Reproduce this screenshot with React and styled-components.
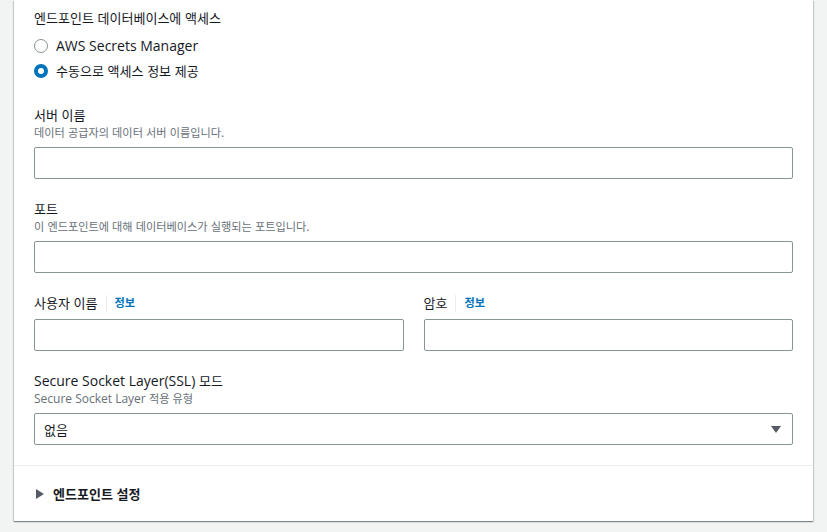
import React from 'react';
import styled, { createGlobalStyle } from 'styled-components';

const GlobalStyle = createGlobalStyle`
  body {
    margin: 0;
    background: #f2f3f3;
    font-family: "Open Sans", "Noto Sans CJK KR", sans-serif;
    color: #16191f;
    font-size: 14px;
  }
`;

const Page = styled.div`
  padding: 0 14px 10px 14px;
`;

const Card = styled.div`
  background: #fff;
  box-shadow: 0 1px 1px 0 rgba(0, 28, 36, 0.3), 1px 1px 1px 0 rgba(0, 28, 36, 0.15),
    -1px 1px 1px 0 rgba(0, 28, 36, 0.15);
`;

const Body = styled.div`
  padding: 8px 20px 20px;
  display: flex;
  flex-direction: column;
  gap: 20px;
`;

// Korean glyphs in the reference font are narrower than Noto CJK
const Hangul = styled.span`
  font-family: "Noto Sans CJK KR", sans-serif;
  font-size: 0.93em;
  line-height: 1;
`;

const T = ({ children }) => (
  <span>
    {String(children)
      .split(/([가-힣]+)/)
      .map((part, i) => (i % 2 ? <Hangul key={i}>{part}</Hangul> : part))}
  </span>
);

const Field = styled.div`
  display: flex;
  flex-direction: column;
`;

const Label = styled.div`
  display: flex;
  align-items: center;
  font-size: 14px;
  line-height: 20px;
  height: 20px;
  color: #16191f;
`;

const Info = styled.span`
  display: inline-flex;
  align-items: center;
  font-size: 12px;
  font-weight: 700;
  color: #0073bb;
  &::before {
    content: '';
    width: 1px;
    height: 17px;
    background: #eaeded;
    margin: 0 8px 0 8px;
  }
`;

const Description = styled.div`
  font-size: 12px;
  line-height: 16px;
  height: 16px;
  color: #687078;
`;

const Control = styled.div`
  margin-top: 6px;
`;

const Input = styled.input`
  display: block;
  box-sizing: border-box;
  width: 100%;
  height: 32px;
  border: 1px solid #879596;
  border-radius: 2px;
  padding: 0 9px;
  font: inherit;
  outline: none;
`;

const Select = styled.div`
  box-sizing: border-box;
  height: 32px;
  border: 1px solid #879596;
  border-radius: 2px;
  padding: 0 11px 0 9px;
  display: flex;
  align-items: center;
  justify-content: space-between;
  font-size: 14px;
`;

const RadioGroup = styled.div`
  display: flex;
  flex-direction: column;
  margin: 5px 0 2px;
`;

const RadioRow = styled.label`
  display: flex;
  align-items: center;
  height: 25px;
  gap: 8px;
  font-size: 14px;
`;

const RadioDot = styled.span`
  box-sizing: border-box;
  width: 14px;
  height: 14px;
  border-radius: 50%;
  border: ${p => (p.checked ? '4px solid #0073bb' : '1.5px solid #879596')};
  background: #fff;
`;

const Row = styled.div`
  display: grid;
  grid-template-columns: 1fr 1fr;
  gap: 20px;
`;

const Footer = styled.div`
  border-top: 1px solid #eaeded;
  height: 56px;
  box-sizing: border-box;
  padding: 0 20px 0 22px;
  display: flex;
  align-items: center;
  gap: 9px;
  font-weight: 700;
  font-size: 14px;
  line-height: 20px;
  color: #16191f;
`;

function Radio({ checked, children }) {
  return (
    <RadioRow>
      <RadioDot checked={checked} />
      <T>{children}</T>
    </RadioRow>
  );
}

export default function App() {
  return (
    <Page>
      <GlobalStyle />
      <Card>
        <Body>
          <Field>
            <Label><T>엔드포인트 데이터베이스에 액세스</T></Label>
            <RadioGroup>
              <Radio>AWS Secrets Manager</Radio>
              <Radio checked>수동으로 액세스 정보 제공</Radio>
            </RadioGroup>
          </Field>
          <Field>
            <Label><T>서버 이름</T></Label>
            <Description><T>데이터 공급자의 데이터 서버 이름입니다.</T></Description>
            <Control><Input /></Control>
          </Field>
          <Field>
            <Label><T>포트</T></Label>
            <Description><T>이 엔드포인트에 대해 데이터베이스가 실행되는 포트입니다.</T></Description>
            <Control><Input /></Control>
          </Field>
          <Row>
            <Field>
              <Label><T>사용자 이름</T><Info><T>정보</T></Info></Label>
              <Control><Input /></Control>
            </Field>
            <Field>
              <Label><T>암호</T><Info><T>정보</T></Info></Label>
              <Control><Input type="password" /></Control>
            </Field>
          </Row>
          <Field>
            <Label><T>Secure Socket Layer(SSL) 모드</T></Label>
            <Description><T>Secure Socket Layer 적용 유형</T></Description>
            <Control>
              <Select>
                <T>없음</T>
                <svg width="10" height="7" viewBox="0 0 10 7">
                  <path d="M0 0h10L5 7z" fill="#545b64" />
                </svg>
              </Select>
            </Control>
          </Field>
        </Body>
        <Footer>
          <svg width="8" height="10" viewBox="0 0 8 10">
            <path d="M0 0l8 5-8 5z" fill="#545b64" />
          </svg>
          <T>엔드포인트 설정</T>
        </Footer>
      </Card>
    </Page>
  );
}
